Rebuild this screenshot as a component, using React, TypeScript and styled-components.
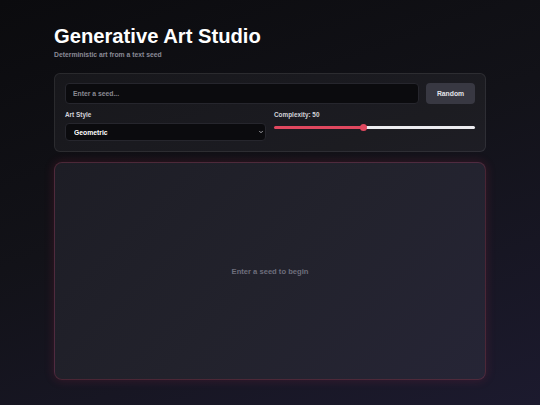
import React, { useState } from "react";
import styled, { createGlobalStyle } from "styled-components";
import { ChevronDown } from "lucide-react";

const GlobalStyle = createGlobalStyle`
  html, body {
    margin: 0;
    padding: 0;
    height: 100%;
  }
  body {
    font-family: "Liberation Sans", Arial, sans-serif;
    background: linear-gradient(160deg, #0b0b0e 0%, #121218 45%, #1c1a2e 100%);
    color: #fff;
    min-height: 405px;
  }
`;

const App = () => {
  const [seed, setSeed] = useState("");
  const [complexity, setComplexity] = useState(50);
  const [style, setStyle] = useState("geometric");

  return (
    <>
      <GlobalStyle />
      <Page>
        <Header>
          <Title>Generative Art Studio</Title>
          <Subtitle>Deterministic art from a text seed</Subtitle>
        </Header>

        <Panel>
          <SeedRow>
            <SeedInput
              placeholder="Enter a seed..."
              value={seed}
              onChange={(e) => setSeed(e.target.value)}
            />
            <RandomButton onClick={() => setSeed(Math.random().toString(36).slice(2, 10))}>
              Random
            </RandomButton>
          </SeedRow>
          <Controls>
            <Field>
              <Label>Art Style</Label>
              <SelectWrap>
                <Select value={style} onChange={(e) => setStyle(e.target.value)}>
                  <option value="geometric">Geometric</option>
                  <option value="flow">Flow Field</option>
                  <option value="circles">Circles</option>
                </Select>
                <Chevron size={6} strokeWidth={3} />
              </SelectWrap>
            </Field>
            <Field>
              <Label>Complexity: {complexity}</Label>
              <Range
                type="range"
                min={10}
                max={100}
                value={complexity}
                fill={((complexity - 10) / 90) * 100}
                onChange={(e) => setComplexity(Number(e.target.value))}
              />
            </Field>
          </Controls>
        </Panel>

        <Canvas>
          <Placeholder>Enter a seed to begin</Placeholder>
        </Canvas>
      </Page>
    </>
  );
};

export default App;

const Page = styled.div`
  width: 432px;
  margin: 0 auto;
  padding-top: 23px;
`;

const Header = styled.header`
  margin-bottom: 15px;
`;

const Title = styled.h1`
  margin: 0;
  font-size: 20.2px;
  line-height: 26px;
  font-weight: 700;
  color: #ffffff;
`;

const Subtitle = styled.p`
  margin: 2px 0 0;
  font-size: 6.8px;
  font-weight: 700;
  color: #8a8a96;
`;

const Panel = styled.section`
  background: rgba(255, 255, 255, 0.045);
  border: 1px solid rgba(255, 255, 255, 0.08);
  border-radius: 6px;
  padding: 9px 10px 10px;
`;

const SeedRow = styled.div`
  display: flex;
  gap: 7px;
`;

const SeedInput = styled.input`
  flex: 1;
  height: 21px;
  box-sizing: border-box;
  background: #0b0b0e;
  border: 1px solid #26262d;
  border-radius: 4px;
  padding: 0 7px;
  color: #fff;
  font-family: inherit;
  font-size: 6.8px;
  font-weight: 700;
  outline: none;

  &::placeholder {
    color: #8a8a92;
  }
`;

const RandomButton = styled.button`
  width: 49px;
  height: 21px;
  background: #383842;
  border: none;
  border-radius: 4px;
  color: #e4e4ea;
  font-family: inherit;
  font-size: 6.8px;
  font-weight: 700;
  cursor: pointer;
`;

const Controls = styled.div`
  display: grid;
  grid-template-columns: 1fr 1fr;
  gap: 8px;
  margin-top: 7px;
`;

const Field = styled.div`
  display: flex;
  flex-direction: column;
`;

const Label = styled.label`
  font-size: 6.4px;
  font-weight: 700;
  color: #d4d4da;
  line-height: 8px;
  margin-bottom: 4px;
`;

const SelectWrap = styled.div`
  position: relative;
  display: flex;
`;

const Select = styled.select`
  display: block;
  width: 100%;
  height: 18px;
  background: #0b0b0e;
  border: 1px solid #26262d;
  border-radius: 4px;
  color: #fff;
  font-family: inherit;
  font-size: 6.8px;
  font-weight: 700;
  padding: 0 8px;
  outline: none;
  appearance: none;
  -webkit-appearance: none;
`;

const Chevron = styled(ChevronDown)`
  position: absolute;
  right: 2px;
  top: 6px;
  color: #d0d0d6;
  pointer-events: none;
`;

const Range = styled.input<{ fill: number }>`
  -webkit-appearance: none;
  appearance: none;
  width: 100%;
  height: 3px;
  margin: 3px 0 0;
  border-radius: 2px;
  outline: none;
  background: linear-gradient(
    to right,
    #e0485f 0%,
    #e0485f ${(p) => p.fill}%,
    #ececf0 ${(p) => p.fill}%,
    #ececf0 100%
  );

  &::-webkit-slider-thumb {
    -webkit-appearance: none;
    width: 7px;
    height: 7px;
    border-radius: 50%;
    background: #e0485f;
    border: none;
  }
`;

const Canvas = styled.div`
  margin-top: 10px;
  height: 218px;
  box-sizing: border-box;
  border-radius: 8px;
  border: 1px solid rgba(190, 60, 95, 0.28);
  background: linear-gradient(135deg, #1d1d25 0%, #22222c 50%, #262536 100%);
  box-shadow: 0 0 10px 1px rgba(190, 40, 80, 0.18);
  display: flex;
  align-items: center;
  justify-content: center;
`;

const Placeholder = styled.span`
  font-size: 7.6px;
  font-weight: 700;
  color: #6e6e7c;
`;
